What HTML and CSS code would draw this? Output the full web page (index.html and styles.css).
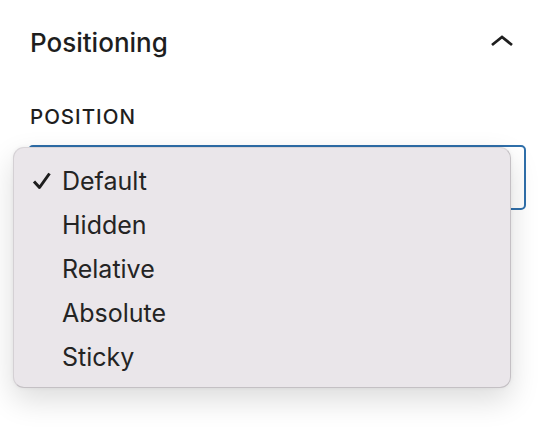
FILE: index.html
```html
<!DOCTYPE html>
<html>
<head>
<meta charset="utf-8">
<link rel="stylesheet" href="styles.css">
</head>
<body>
<div class="panel">
  <div class="panel-header">
    <h2 class="panel-title">Positioning</h2>
    <svg class="chevron" width="24" height="14" viewBox="0 0 24 14"><path d="M2 11 L12 3 L22 11" fill="none" stroke="#1e1e1e" stroke-width="2.8"/></svg>
  </div>
  <div class="field">
    <label class="field-label">POSITION</label>
    <div class="select-box"></div>
  </div>
  <ul class="menu">
    <li class="menu-item selected"><svg class="check" width="20" height="18" viewBox="0 0 20 18"><path d="M2 9.5 L7.5 15.5 L17.5 1.5" fill="none" stroke="#1e1e1e" stroke-width="3" stroke-linejoin="round"/></svg>Default</li>
    <li class="menu-item">Hidden</li>
    <li class="menu-item">Relative</li>
    <li class="menu-item">Absolute</li>
    <li class="menu-item">Sticky</li>
  </ul>
</div>
</body>
</html>
```
FILE: styles.css
```css
* { box-sizing: border-box; }
body {
  margin: 0;
  background: #ffffff;
  font-family: Inter, "Noto Sans", sans-serif;
  color: #1e1e1e;
}
.panel {
  position: relative;
  padding: 20px 28px 0 28px;
  height: 444px;
}
.panel-header {
  display: flex;
  align-items: center;
  justify-content: space-between;
  height: 46px;
  padding: 0 12px 0 2px;
}
.panel-title {
  margin: 0;
  font-size: 26px;
  font-weight: 500;
  line-height: 32px;
}
.chevron { display: block; margin-top: -4px; }
.field { margin-top: 39px; }
.field-label {
  display: block;
  padding-left: 2px;
  font-size: 20.5px;
  font-weight: 500;
  line-height: 24px;
  letter-spacing: 1px;
}
.select-box {
  margin-top: 16px;
  height: 65px;
  border: 2.5px solid #2f6faa;
  border-radius: 5px;
  background: #fff;
}
.menu {
  position: absolute;
  left: 13px;
  top: 147px;
  width: 498px;
  height: 241px;
  margin: 0;
  padding: 11px 0 9px;
  list-style: none;
  background: #eae6ea;
  border: 1px solid #c4c0c4;
  border-top-color: #d8d4d8;
  border-left-color: #d4d0d4;
  border-radius: 11px;
  box-shadow: 0 12px 30px rgba(0, 0, 0, 0.14), 0 0 4px rgba(0, 0, 0, 0.05);
}
.menu-item {
  position: relative;
  height: 44px;
  line-height: 44px;
  padding-left: 48px;
  font-size: 25px;
  font-weight: 400;
  color: #242424;
}
.check {
  position: absolute;
  left: 18px;
  top: 13px;
}
```
